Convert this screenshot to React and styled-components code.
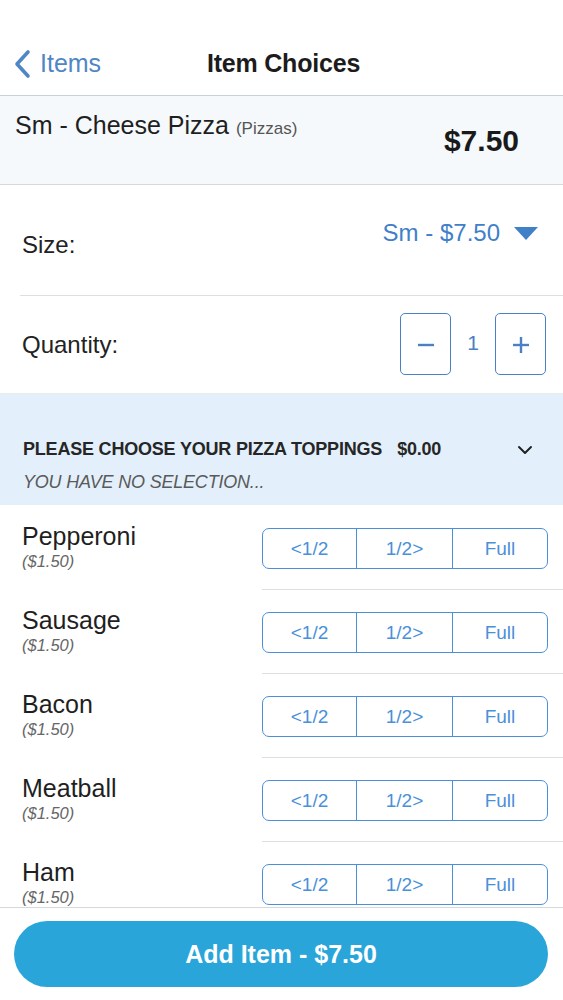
import React from "react";
import styled, { createGlobalStyle } from "styled-components";

const GlobalStyle = createGlobalStyle`
  html, body {
    margin: 0;
    padding: 0;
    background: #fff;
    font-family: "Liberation Sans", Arial, sans-serif;
  }
  * { box-sizing: border-box; }
`;

const Screen = styled.div`
  width: 563px;
  height: 1000px;
  display: flex;
  flex-direction: column;
  background: #fff;
  overflow: hidden;
`;

const NavBar = styled.div`
  height: 96px;
  padding-top: 32px;
  display: grid;
  grid-template-columns: 1fr auto 1fr;
  align-items: center;
  border-bottom: 1px solid #c9d0d6;
`;

const BackButton = styled.div`
  display: flex;
  align-items: center;
  gap: 8px;
  padding-left: 12px;
  color: #4f86c6;
  font-size: 25px;
`;

const NavTitle = styled.div`
  font-size: 25px;
  font-weight: 700;
  color: #1c1c1c;
  letter-spacing: -0.2px;
  margin-left: 4px;
`;

const ItemHeader = styled.div`
  height: 89px;
  background: #f5f9fc;
  border-bottom: 1px solid #d6dadd;
  display: flex;
  justify-content: space-between;
  padding: 14px 44px 0 15px;
`;

const ItemName = styled.div`
  font-size: 25px;
  color: #1f1f1f;
  line-height: 30px;
`;

const ItemCategory = styled.span`
  font-size: 17px;
  color: #555;
`;

const ItemPrice = styled.div`
  font-size: 30px;
  font-weight: 700;
  color: #1a1a1a;
  margin-top: 14px;
`;

const OptionRow = styled.div`
  height: ${(p) => p.$height}px;
  margin-left: 20px;
  padding-right: 18px;
  display: flex;
  align-items: center;
  justify-content: space-between;
  border-bottom: ${(p) => (p.$divider ? "1px solid #dedede" : "none")};
`;

const OptionLabel = styled.div`
  font-size: 24px;
  color: #222;
  margin-left: 2px;
  margin-top: ${(p) => p.$offset || 0}px;
`;

const SizeSelect = styled.div`
  display: flex;
  align-items: center;
  gap: 14px;
  color: #3f80c9;
  font-size: 24px;
  margin-top: -14px;
  margin-right: 7px;
`;

const Stepper = styled.div`
  display: flex;
  align-items: center;
  margin-right: -1px;
  margin-top: -1px;
`;

const StepButton = styled.div`
  width: 51px;
  height: 62px;
  border: 1.5px solid #4a80c4;
  border-radius: 5px;
  display: flex;
  align-items: center;
  justify-content: center;
`;

const StepValue = styled.div`
  width: 44px;
  text-align: center;
  font-size: 21px;
  color: #4a80c4;
  margin-top: -2px;
`;

const ToppingsHeader = styled.div`
  height: 112px;
  background: #e3f0fb;
  border-top: 1px solid #e8ecef;
  padding: 45px 30px 0 23px;
`;

const ToppingsTitleRow = styled.div`
  display: flex;
  align-items: center;
  justify-content: space-between;
`;

const ToppingsTitle = styled.div`
  font-size: 18px;
  font-weight: 700;
  color: #262626;
  letter-spacing: -0.2px;
  span {
    margin-left: 15px;
  }
`;

const ToppingsHint = styled.div`
  margin-top: 12px;
  font-size: 18px;
  font-style: italic;
  color: #5a5a5a;
  letter-spacing: -0.2px;
`;

const ToppingList = styled.div`
  flex: 1;
  overflow: hidden;
  padding-top: 1px;
`;

const ToppingRow = styled.div`
  height: 84px;
  display: flex;
  align-items: flex-start;
  justify-content: space-between;
  padding-left: 22px;
  position: relative;
  &::after {
    content: "";
    position: absolute;
    left: 262px;
    right: 0;
    bottom: 0;
    border-bottom: 1px solid #dedede;
  }
`;

const ToppingInfo = styled.div`
  padding-top: 16px;
`;

const ToppingName = styled.div`
  font-size: 25px;
  color: #1f1f1f;
  line-height: 29px;
`;

const ToppingPrice = styled.div`
  font-size: 16.5px;
  font-style: italic;
  color: #666;
  line-height: 20px;
`;

const Segments = styled.div`
  margin-top: 22px;
  margin-right: 15px;
  width: 286px;
  height: 41px;
  display: grid;
  grid-template-columns: 93px 96px 1fr;
  border: 1.5px solid #4a90d9;
  border-radius: 7px;
  overflow: hidden;
`;

const Segment = styled.div`
  display: flex;
  align-items: center;
  justify-content: center;
  font-size: 19px;
  color: #4a90d9;
  border-left: ${(p) => (p.$first ? "none" : "1.5px solid #4a90d9")};
`;

const Footer = styled.div`
  height: 93px;
  border-top: 1px solid #d3d8dc;
  padding: 13px 15px 0 14px;
  background: #fff;
`;

const AddButton = styled.button`
  width: 100%;
  height: 66px;
  border: none;
  border-radius: 33px;
  background: #29a5da;
  color: #fff;
  font-family: "Liberation Sans", Arial, sans-serif;
  font-size: 25px;
  font-weight: 700;
  cursor: pointer;
`;

const toppings = ["Pepperoni", "Sausage", "Bacon", "Meatball", "Ham"];

const App = () => {
  return (
    <>
      <GlobalStyle />
      <Screen>
        <NavBar>
          <BackButton>
            <svg width="20" height="30" viewBox="0 0 20 30">
              <polyline
                points="16,3 5,15 16,27"
                fill="none"
                stroke="#4f86c6"
                strokeWidth="3.6"
                strokeLinecap="round"
                strokeLinejoin="round"
              />
            </svg>
            Items
          </BackButton>
          <NavTitle>Item Choices</NavTitle>
          <div />
        </NavBar>

        <ItemHeader>
          <ItemName>
            Sm - Cheese Pizza <ItemCategory>(Pizzas)</ItemCategory>
          </ItemName>
          <ItemPrice>$7.50</ItemPrice>
        </ItemHeader>

        <OptionRow $height={111} $divider>
          <OptionLabel $offset={10}>Size:</OptionLabel>
          <SizeSelect>
            Sm - $7.50
            <svg width="24" height="13" viewBox="0 0 24 13">
              <polygon points="0,0 24,0 12,13" fill="#3f80c9" />
            </svg>
          </SizeSelect>
        </OptionRow>

        <OptionRow $height={97}>
          <OptionLabel>Quantity:</OptionLabel>
          <Stepper>
            <StepButton>
              <svg width="18" height="18" viewBox="0 0 18 18">
                <line x1="1" y1="10" x2="17" y2="10" stroke="#4a80c4" strokeWidth="2.4" />
              </svg>
            </StepButton>
            <StepValue>1</StepValue>
            <StepButton>
              <svg width="20" height="20" viewBox="0 0 20 20">
                <line x1="2" y1="11" x2="18" y2="11" stroke="#4a80c4" strokeWidth="2.4" />
                <line x1="10" y1="3" x2="10" y2="19" stroke="#4a80c4" strokeWidth="2.4" />
              </svg>
            </StepButton>
          </Stepper>
        </OptionRow>

        <ToppingsHeader>
          <ToppingsTitleRow>
            <ToppingsTitle>
              PLEASE CHOOSE YOUR PIZZA TOPPINGS<span>$0.00</span>
            </ToppingsTitle>
            <svg width="16" height="10" viewBox="0 0 16 10">
              <polyline
                points="2,2 8,8 14,2"
                fill="none"
                stroke="#222"
                strokeWidth="2"
                strokeLinecap="round"
                strokeLinejoin="round"
              />
            </svg>
          </ToppingsTitleRow>
          <ToppingsHint>YOU HAVE NO SELECTION...</ToppingsHint>
        </ToppingsHeader>

        <ToppingList>
          {toppings.map((name) => (
            <ToppingRow key={name}>
              <ToppingInfo>
                <ToppingName>{name}</ToppingName>
                <ToppingPrice>($1.50)</ToppingPrice>
              </ToppingInfo>
              <Segments>
                <Segment $first>&lt;1/2</Segment>
                <Segment>1/2&gt;</Segment>
                <Segment>Full</Segment>
              </Segments>
            </ToppingRow>
          ))}
        </ToppingList>

        <Footer>
          <AddButton>Add Item - $7.50</AddButton>
        </Footer>
      </Screen>
    </>
  );
};

export default App;
